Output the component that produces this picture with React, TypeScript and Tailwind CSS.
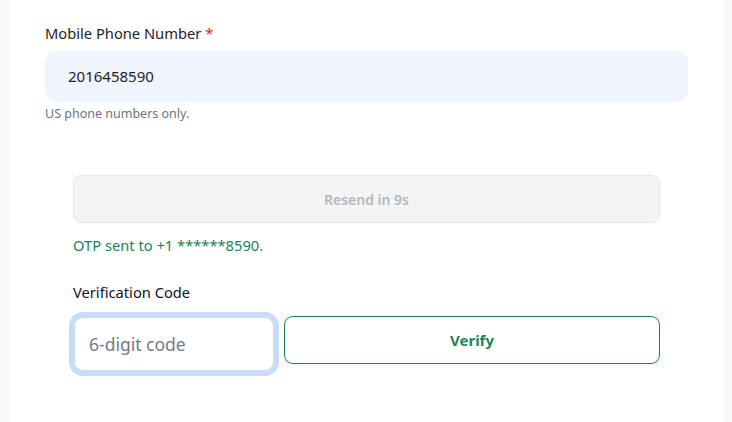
import React from "react";

export default function App() {
  return (
    <div
      className="w-[732px] h-[422px] overflow-hidden bg-[#f8f8f8] flex"
      style={{ fontFamily: '"Noto Sans", "Open Sans", sans-serif' }}
    >
      <div className="ml-[9px] w-[715px] h-full bg-white px-[36px] pt-[22px]">
        <label className="block text-[14.7px] leading-[22px] text-[#1f2328]">
          Mobile Phone Number <span className="text-[#e02424]">*</span>
        </label>
        <div className="mt-[7px] h-[51px] rounded-[11px] bg-[#f0f4fd] flex items-center px-[23px] text-[15px] text-[#1f2328]">
          2016458590
        </div>
        <p className="mt-[4px] text-[12.5px] leading-[16px] text-[#6b7280]">US phone numbers only.</p>

        <div className="px-[28px] mt-[53px]">
          <button className="w-full h-[48px] rounded-[8px] border border-[#e3e5e8] bg-[#f3f4f6] text-[14px] font-semibold text-[#b4b8be]">
            Resend in 9s
          </button>
          <p className="mt-[11px] text-[14.7px] leading-[22px] text-[#168452]">OTP sent to +1 ******8590.</p>
          <label className="block mt-[25px] text-[14.7px] leading-[22px] text-[#111418]">Verification Code</label>
          <div className="mt-[13px] flex gap-[9px] items-start">
            <div className="w-[202px] h-[56px] rounded-[10px] border-2 border-[#c8dbf8] ring-4 ring-[#c8dbf8] bg-white flex items-center px-[14px] text-[17.5px] text-[#6e7b8b]">
              6-digit code
            </div>
            <button className="flex-1 h-[48px] rounded-[9px] border border-[#17804f] bg-white text-[15px] font-bold text-[#1b8554]">
              Verify
            </button>
          </div>
        </div>
      </div>
    </div>
  );
}
